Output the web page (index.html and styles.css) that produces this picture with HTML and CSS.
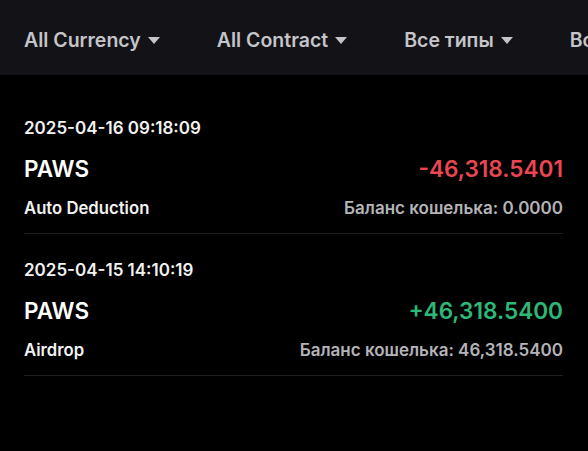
FILE: index.html
```html
<!DOCTYPE html>
<html>
<head>
<meta charset="utf-8">
<link rel="stylesheet" href="styles.css">
</head>
<body>
<div class="filters">
  <div class="filter"><span>All Currency</span><span class="caret"></span></div>
  <div class="filter"><span>All Contract</span><span class="caret"></span></div>
  <div class="filter"><span>Все типы</span><span class="caret"></span></div>
  <div class="filter"><span>Все статусы</span><span class="caret"></span></div>
</div>
<div class="list">
  <div class="record">
    <div class="row date">2025-04-16 09:18:09</div>
    <div class="row main"><span class="coin">PAWS</span><span class="amount neg">-46,318.5401</span></div>
    <div class="row sub"><span class="type">Auto Deduction</span><span class="balance">Баланс кошелька: 0.0000</span></div>
  </div>
  <div class="record">
    <div class="row date">2025-04-15 14:10:19</div>
    <div class="row main"><span class="coin">PAWS</span><span class="amount pos">+46,318.5400</span></div>
    <div class="row sub"><span class="type">Airdrop</span><span class="balance">Баланс кошелька: 46,318.5400</span></div>
  </div>
</div>
</body>
</html>
```
FILE: styles.css
```css
html, body {
  margin: 0;
  padding: 0;
  background: #000;
  width: 588px;
  height: 451px;
  overflow: hidden;
  font-family: "Inter", "Roboto", sans-serif;
}
.filters {
  height: 75px;
  background: #121217;
  display: flex;
  align-items: center;
  gap: 57px;
  padding: 4px 0 0 24px;
  box-sizing: border-box;
  white-space: nowrap;
  overflow: hidden;
}
.filter {
  display: flex;
  align-items: center;
  gap: 7px;
  color: #c4c4c9;
  font-size: 19.5px;
  font-weight: 600;
  flex: none;
}
.caret {
  width: 0;
  height: 0;
  border-left: 6px solid transparent;
  border-right: 6px solid transparent;
  border-top: 7px solid #c4c4c9;
  margin-top: 2px;
}
.list {
  padding: 17px 25px 0 24px;
}
.record {
  padding: 16px 0 5px;
  border-bottom: 1px solid #1e1e22;
}
.row {
  height: 40px;
  display: flex;
  align-items: center;
  justify-content: space-between;
}
.date {
  color: #f2f2f2;
  font-size: 17px;
  font-weight: 600;
}
.coin {
  color: #fff;
  font-size: 22.5px;
  font-weight: 600;
}
.amount {
  font-size: 22.6px;
  font-weight: 600;
}
.neg { color: #ea4652; }
.pos { color: #2cb877; }
.type {
  color: #f2f2f2;
  font-size: 16.7px;
  font-weight: 600;
}
.balance {
  color: #b4b4b8;
  font-size: 17px;
  font-weight: 600;
}
```
